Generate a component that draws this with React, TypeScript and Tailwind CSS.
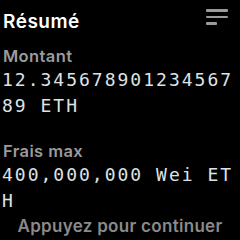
import React from "react";

const sans = { fontFamily: "Inter, 'Noto Sans', sans-serif" };

export default function App() {
  return (
    <div className="w-[240px] h-[240px] bg-black flex flex-col overflow-hidden" style={sans}>
      <div className="flex items-center justify-between h-[38px] pl-[3px] pr-[12px]">
        <div className="text-[19px] font-semibold text-white tracking-[0.5px] leading-[24px] pt-[5px]">Résumé</div>
        <div className="flex flex-col gap-[4px] mt-[-4px]">
          <div className="w-[22px] h-[2.5px] bg-[#9a9a9a] rounded-[1px]" />
          <div className="w-[22px] h-[2.5px] bg-[#9a9a9a] rounded-[1px]" />
          <div className="w-[11px] h-[2.5px] bg-[#9a9a9a] rounded-[1px]" />
        </div>
      </div>
      <div className="pl-[2px] mt-[8px]">
        <div className="text-[16.5px] font-semibold text-[#9b9b9b] leading-[20px] pl-[1px] tracking-[0.4px]">Montant</div>
        <div
          className="w-[236px] text-[18px] leading-[26px] text-[#dde2e6] tracking-[2px] break-all mt-[1px]"
          style={{ fontFamily: "'DejaVu Sans Mono', monospace" }}
        >
          12.34567890123456789 ETH
        </div>
        <div className="text-[16.5px] font-semibold text-[#9b9b9b] leading-[20px] pl-[1px] mt-[22px] tracking-[0.4px]">Frais max</div>
        <div
          className="w-[236px] text-[18px] leading-[26px] text-[#dde2e6] tracking-[2px] break-all mt-[1px]"
          style={{ fontFamily: "'DejaVu Sans Mono', monospace" }}
        >
          400,000,000 Wei ETH
        </div>
      </div>
      <div className="mt-auto pb-[3px] text-center text-[17px] font-semibold text-[#8a8a8a] leading-[22px] tracking-[0.3px]">
        Appuyez pour continuer
      </div>
    </div>
  );
}
